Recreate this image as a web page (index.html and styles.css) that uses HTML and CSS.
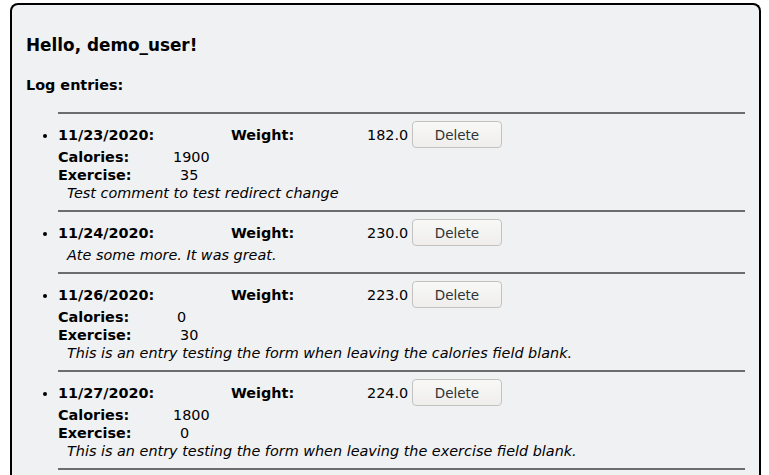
FILE: index.html
```html
<!DOCTYPE html>
<html>
<head>
<meta charset="utf-8">
<link rel="stylesheet" href="styles.css">
</head>
<body>
<div class="card">
  <h1 class="greeting">Hello, demo_user!</h1>
  <p class="section">Log entries:</p>
  <ul class="entries">
    <li class="entry">
      <div class="head">
        <span class="date">11/23/2020:</span>
        <span class="wlabel">Weight:</span>
        <span class="wvalue">182.0</span>
        <button class="del">Delete</button>
      </div>
      <div class="stat"><span class="slabel cal">Calories:</span><span>1900</span></div>
      <div class="stat"><span class="slabel ex">Exercise:</span><span>35</span></div>
      <div class="comment">Test comment to test redirect change</div>
    </li>
    <li class="entry">
      <div class="head">
        <span class="date">11/24/2020:</span>
        <span class="wlabel">Weight:</span>
        <span class="wvalue">230.0</span>
        <button class="del">Delete</button>
      </div>
      <div class="comment">Ate some more. It was great.</div>
    </li>
    <li class="entry">
      <div class="head">
        <span class="date">11/26/2020:</span>
        <span class="wlabel">Weight:</span>
        <span class="wvalue">223.0</span>
        <button class="del">Delete</button>
      </div>
      <div class="stat"><span class="slabel cal">Calories:</span><span class="short">0</span></div>
      <div class="stat"><span class="slabel ex">Exercise:</span><span>30</span></div>
      <div class="comment">This is an entry testing the form when leaving the calories field blank.</div>
    </li>
    <li class="entry">
      <div class="head">
        <span class="date">11/27/2020:</span>
        <span class="wlabel">Weight:</span>
        <span class="wvalue">224.0</span>
        <button class="del">Delete</button>
      </div>
      <div class="stat"><span class="slabel cal">Calories:</span><span>1800</span></div>
      <div class="stat"><span class="slabel ex">Exercise:</span><span>0</span></div>
      <div class="comment">This is an entry testing the form when leaving the exercise field blank.</div>
    </li>
  </ul>
</div>
</body>
</html>
```

FILE: styles.css
```css
html, body {
  margin: 0;
  padding: 0;
  background: #ffffff;
}
body {
  font-family: "DejaVu Sans", sans-serif;
  font-size: 14.4px;
  color: #000;
  padding: 3px 8px 0 10px;
}
.card {
  border: 2px solid #000;
  border-bottom: none;
  border-radius: 8px 8px 0 0;
  background: #f0f1f3;
  padding: 0 14px 20px 14px;
  min-height: 480px;
}
.greeting {
  margin: 30px 0 0 0;
  font-size: 16.85px;
  line-height: 21px;
  font-weight: bold;
}
.section {
  margin: 21px 0 0 0;
  font-weight: bold;
  line-height: 16px;
}
.entries {
  margin: 19px 0 0 0;
  padding: 0 0 0 32px;
}
.entry {
  padding: 7px 0 8px 0;
  border-bottom: 2px solid #6c6c6c;
}
.entry:first-child {
  border-top: 2px solid #6c6c6c;
}
.head {
  display: flex;
  align-items: center;
  line-height: 18px;
}
.date {
  font-weight: bold;
  width: 173px;
}
.wlabel {
  font-weight: bold;
  width: 136px;
}
.wvalue {
  width: 40px;
  text-align: right;
}
.del {
  margin-left: 5px;
  width: 90px;
  height: 27px;
  font-family: "DejaVu Sans", sans-serif;
  font-size: 13.5px;
  color: #2e3436;
  background: linear-gradient(#f8f8f7, #efeeec);
  border: 1px solid #c4c2bf;
  border-radius: 4px;
  padding: 0;
}
.stat {
  line-height: 18px;
}
.slabel {
  display: inline-block;
  font-weight: bold;
}
.cal {
  width: 115px;
}
.ex {
  width: 122px;
}
.short {
  margin-left: 4px;
}
.comment {
  font-style: italic;
  line-height: 18px;
  padding-left: 9px;
}
```
